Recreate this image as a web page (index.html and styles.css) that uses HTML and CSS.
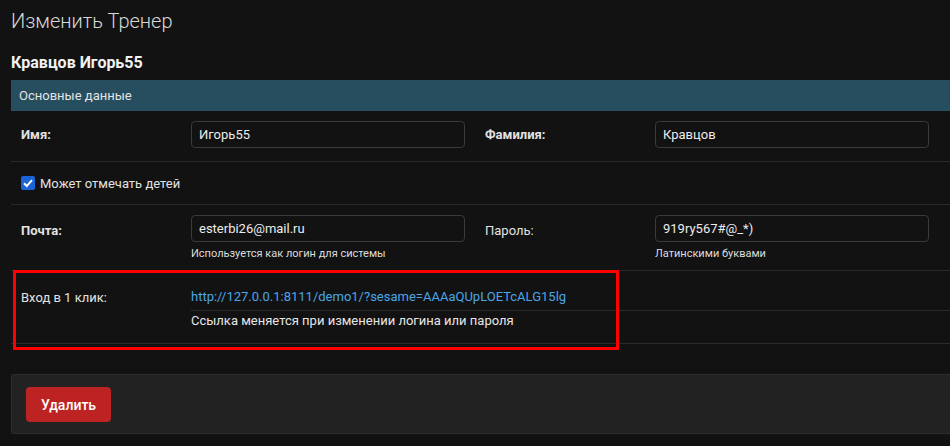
FILE: index.html
```html
<!DOCTYPE html>
<html lang="ru">
<head>
<meta charset="utf-8">
<title>Изменить Тренер</title>
<link rel="stylesheet" href="styles.css">
</head>
<body>
<div class="page">
  <h1 class="title">Изменить Тренер</h1>
  <h2 class="name">Кравцов Игорь55</h2>
  <div class="section-head">Основные данные</div>
  <div class="rows">
    <div class="row row-name">
      <div class="label bold">Имя:</div>
      <div class="field"><div class="input">Игорь55</div></div>
      <div class="label bold">Фамилия:</div>
      <div class="field"><div class="input">Кравцов</div></div>
    </div>
    <div class="row row-check">
      <label class="check"><span class="box"><svg viewBox="0 0 14 14" width="14" height="14"><path d="M3 7.2 L5.8 10 L11 4.2" fill="none" stroke="#fff" stroke-width="2"/></svg></span>Может отмечать детей</label>
    </div>
    <div class="row row-mail">
      <div class="label bold">Почта:</div>
      <div class="field"><div class="input">esterbi26@mail.ru</div><div class="help">Используется как логин для системы</div></div>
      <div class="label">Пароль:</div>
      <div class="field"><div class="input">919ry567#@_*)</div><div class="help">Латинскими буквами</div></div>
    </div>
    <div class="row row-link">
      <div class="label link-label">Вход в 1 клик:</div>
      <div class="nested">
        <div class="nested-row link-row"><a class="link" href="#">http://127.0.0.1:8111/demo1/?sesame=AAAaQUpLOETcALG15lg</a></div>
        <div class="nested-row note-row">Ссылка меняется при изменении логина или пароля</div>
      </div>
      <div class="highlight"></div>
    </div>
  </div>
  <div class="actions">
    <button class="btn-delete">Удалить</button>
  </div>
</div>
</body>
</html>
```
FILE: styles.css
```css
* { box-sizing: border-box; }
html, body { margin: 0; padding: 0; background: #121212; }
body {
  font-family: Roboto, "Liberation Sans", sans-serif;
  color: #e2e2e2;
  font-size: 13px;
  overflow: hidden;
}
.page { padding: 8px 0 0 11px; }
.title {
  margin: 0;
  font-size: 20px;
  font-weight: 300;
  line-height: 26px;
  color: #d8d8d8;
}
.name {
  margin: 19px 0 0;
  font-size: 16px;
  font-weight: 700;
  line-height: 20px;
  color: #f2f2f2;
}
.section-head {
  margin-top: 7px;
  height: 31px;
  line-height: 31px;
  background: #264e5e;
  padding-left: 8px;
  color: #e4e4e4;
  font-size: 13px;
}
.row {
  position: relative;
  display: grid;
  grid-template-columns: 180px 284px 180px 284px 1fr;
  border-bottom: 1px solid #2a2a2a;
}
.label { padding-left: 10px; color: #e2e2e2; line-height: 15px; }
.bold { font-weight: 700; }
.input {
  width: 274px;
  height: 27px;
  border: 1px solid #3a3a3a;
  border-radius: 4px;
  padding: 0 7px;
  line-height: 25px;
  color: #ececec;
  font-size: 13px;
  background: #121212;
}
.row-name { height: 51px; align-items: center; padding-bottom: 3px; }
.row-check { height: 43px; display: flex; align-items: center; padding-left: 10px; }
.check { display: flex; align-items: center; gap: 5px; color: #e2e2e2; }
.box {
  width: 14px; height: 14px; border-radius: 2px;
  background: #1a64d8;
  display: inline-flex;
}
.row-mail { height: 66px; padding-top: 10px; }
.row-mail .label { padding-top: 8px; }
.help { margin-top: 5px; font-size: 11px; line-height: 14px; color: #dcdcdc; }
.row-link { height: 73px; grid-template-columns: 180px 1fr; }
.link-label { padding-top: 19px; }
.link-row {
  height: 40px;
  padding-top: 18px;
  line-height: 15px;
  border-bottom: 1px solid #2a2a2a;
}
.link { color: #4aa6e8; text-decoration: none; }
.note-row { padding-top: 2px; line-height: 15px; color: #e6e6e6; }
.highlight {
  position: absolute;
  left: 2px;
  top: -1px;
  width: 606px;
  height: 80px;
  border: 3px solid #ff0000;
  pointer-events: none;
}
.actions {
  margin-top: 30px;
  background: #222222;
  border: 1px solid #2c2c2c;
  border-right: none;
  border-radius: 3px 0 0 3px;
  padding: 12px 14px;
  height: 60px;
}
.btn-delete {
  width: 85px;
  height: 35px;
  border: none;
  border-radius: 4px;
  background: #bd2323;
  color: #fff;
  font-family: Roboto, "Liberation Sans", sans-serif;
  font-size: 14px;
  font-weight: 500;
  padding: 0;
}
```
